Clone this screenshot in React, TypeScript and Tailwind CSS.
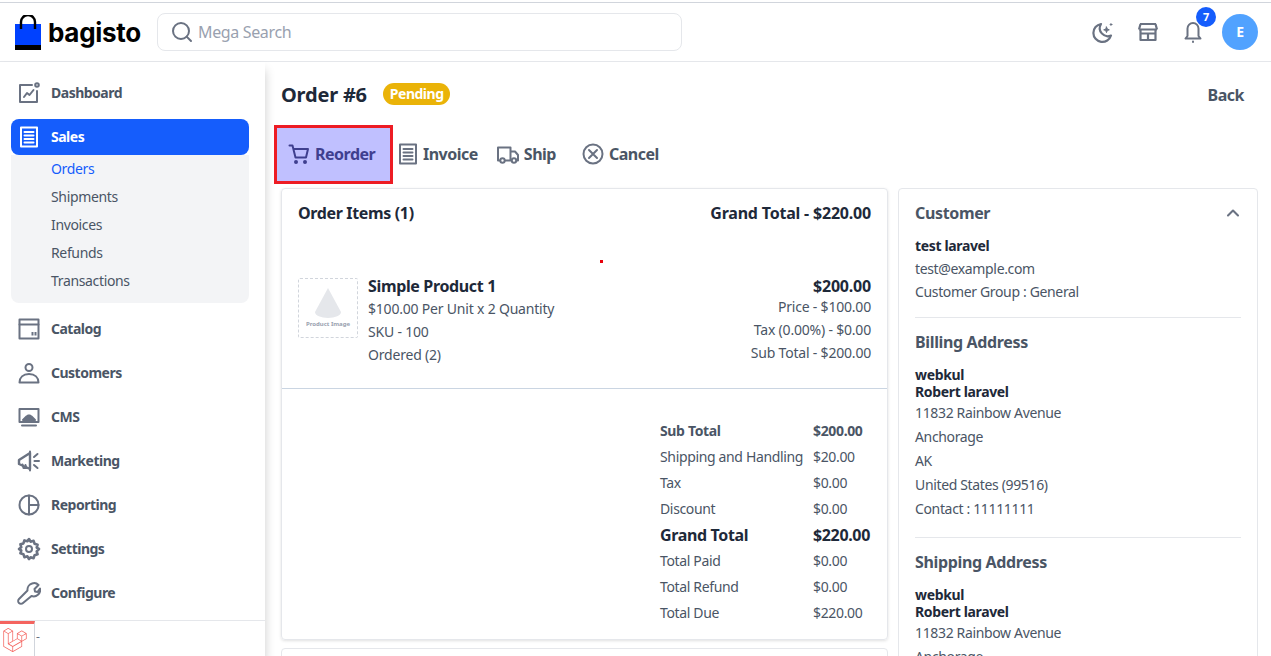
import { ChevronUp, Search } from "lucide-react";
import { SiLaravel } from "react-icons/si";
import type { ReactNode } from "react";

// icon strokes are all drawn on a 24 box, like the admin icon font
function Ico({ children, className = "size-6" }: { children: ReactNode; className?: string }) {
  return (
    <svg viewBox="0 0 24 24" fill="none" stroke="currentColor" strokeWidth="2" strokeLinecap="round" strokeLinejoin="round" className={className}>
      {children}
    </svg>
  );
}

const listIcon = (
  <>
    <rect x="4" y="2.500" width="16" height="19" />
    <path d="M7.500 7h9M7.500 10.500h9M7.500 14h9M7.500 17.500h9" />
  </>
);

const menu: { label: string; icon: ReactNode }[] = [
  {
    label: "Catalog",
    icon: (
      <>
        <rect x="2.500" y="2.500" width="19" height="19" />
        <path d="M2.500 7.500h19" />
        <path d="M15.500 15v3.500M18.500 15v3.500" strokeLinecap="butt" />
      </>
    ),
  },
  {
    label: "Customers",
    icon: (
      <>
        <circle cx="12" cy="6.500" r="3.500" />
        <path d="M2.500 21.500c0-5 3.500-8.500 9.500-8.500s9.500 3.500 9.500 8.500z" />
      </>
    ),
  },
  {
    label: "CMS",
    icon: (
      <>
        <path d="M2.500 4h19v13h-19zM5 20.500h14" />
        <path d="M6 15l3.500-3.500 1.500-1 2 0 1.500 1L18 15z" fill="currentColor" />
      </>
    ),
  },
  {
    label: "Marketing",
    icon: (
      <>
        <path d="M2 11l11-7v16L2 15z" strokeWidth="2.400" />
        <path d="M5.500 15.500l1 3.500h3l-1-3" />
        <path d="M13 2.500v19M17 8l3.500-3M17.500 12h4.500M17 16l3.500 3" />
      </>
    ),
  },
  {
    label: "Reporting",
    icon: (
      <>
        <circle cx="12" cy="12" r="9.500" />
        <path d="M12 2.500V12h9.500M12 12v9.500" />
      </>
    ),
  },
  {
    label: "Settings",
    icon: (
      <>
        <path
          d="M12 2l1.600 2.700 3-.9 1 3 3 .9-.9 3L22 12l-2.300 2.300.9 3-3 .9-1 3-3-.9L12 22l-1.600-2.700-3 .9-1-3-3-.9.900-3L2 12l2.300-1.700-.9-3 3-.9 1-3 3 .9z"
          strokeWidth="2.600"
        />
        <circle cx="12" cy="12" r="3" />
      </>
    ),
  },
  {
    label: "Configure",
    icon: (
      <path d="M15 2.500a6 6 0 0 1 6.500 1.500l-4 4 .5 2.500 2.500.5 2.500-3.500a6.500 6.500 0 0 1-8.500 7.500L6 22a2.800 2.800 0 0 1-4-4l8.500-8.500A6.500 6.500 0 0 1 15 2.500z" />
    ),
  },
];

const subMenu = ["Orders", "Shipments", "Invoices", "Refunds", "Transactions"];

const totals = [
  { label: "Sub Total", value: "$200.00", cls: "text-sm font-bold text-gray-600" },
  { label: "Shipping and Handling", value: "$20.00", cls: "text-sm text-gray-600" },
  { label: "Tax", value: "$0.00", cls: "text-sm text-gray-600" },
  { label: "Discount", value: "$0.00", cls: "text-sm text-gray-600" },
  { label: "Grand Total", value: "$220.00", cls: "text-base font-bold text-gray-800" },
  { label: "Total Paid", value: "$0.00", cls: "text-sm text-gray-600" },
  { label: "Total Refund", value: "$0.00", cls: "text-sm text-gray-600" },
  { label: "Total Due", value: "$220.00", cls: "text-sm text-gray-600" },
];

function NavRow({ label, icon }: { label: string; icon: ReactNode }) {
  return (
    <div className="flex h-9 items-center gap-2.5 px-1.5 text-sm font-bold tracking-[-0.5px] text-gray-600">
      <Ico className="size-6 text-gray-500">{icon}</Ico>
      {label}
    </div>
  );
}

function Address() {
  return (
    <>
      <p className="mt-[14px] text-sm leading-[17px] font-bold text-gray-800">webkul</p>
      <p className="text-sm leading-[17px] font-bold text-gray-800">Robert laravel</p>
      <div className="mt-[1px] text-sm leading-6 text-gray-600">
        <p>11832 Rainbow Avenue</p>
        <p>Anchorage</p>
        <p>AK</p>
        <p>United States (99516)</p>
        <p>Contact : 11111111</p>
      </div>
    </>
  );
}

export default function App() {
  return (
    <div className="relative h-[656px] overflow-hidden bg-white font-['Noto_Sans',sans-serif] tracking-[-0.35px]">
      <div className="h-[3px] border-b border-gray-300" />

      <header className="flex h-[59px] items-center border-b border-gray-200 pr-[13px] pl-[15px]">
        <svg viewBox="0 0 26 35" className="h-[35px] w-[26px]">
          <rect y="9" width="26" height="21" fill="#0041ff" />
          <rect y="30" width="26" height="5" fill="#000" />
          <path d="M6 14V7a7 7 0 0 1 14 0v7" fill="none" stroke="#000" strokeWidth="2.400" />
        </svg>
        <span className="ml-[7px] w-[94px] font-['Inter',sans-serif] text-[26px] font-bold tracking-[-0.3px] text-black">bagisto</span>
        <div className="ml-[15px] flex h-[38px] w-[525px] items-center gap-[4px] rounded-lg border border-gray-200 px-[12px]">
          <Search className="size-[24px] text-gray-500" strokeWidth={2} />
          <span className="text-base text-gray-400">Mega Search</span>
        </div>
        <div className="ml-auto flex items-center text-gray-500">
          <Ico className="size-6">
            <path d="M10 4a9 9 0 1 0 10 11.500A8 8 0 0 1 10 4z" strokeWidth="2.200" />
            <path d="M15.500 7l.8 2 2 .8-2 .8-.8 2-.8-2-2-.8 2-.8z" fill="currentColor" strokeWidth="1" />
            <circle cx="20" cy="4.500" r="0.800" fill="currentColor" strokeWidth="1" />
          </Ico>
          <Ico className="ml-[21px] size-6">
            <path d="M4 4h16M4.500 9.500v10.500h15V9.500M3 9.500h18M3 9.500L4.500 4M21 9.500L19.500 4M12 13.500H5M12 13.500v6.500M12 13.500h7" strokeWidth="2.200" strokeLinecap="butt" />
          </Ico>
          <div className="relative ml-[21px] size-6">
            <Ico className="size-6">
              <path d="M12 3a5.500 5.500 0 0 0-5.500 5.500V16L4.500 18.500h15L17.500 16V8.500A5.500 5.500 0 0 0 12 3z" />
              <path d="M12 21.500v.5" />
            </Ico>
            <span className="absolute -top-[13px] left-[15px] flex size-[20px] items-center justify-center rounded-full bg-blue-600 text-[11px] font-bold text-white">7</span>
          </div>
          <div className="ml-[17px] flex size-9 items-center justify-center rounded-full bg-blue-400 text-sm font-bold text-white">E</div>
        </div>
      </header>

      <div className="flex">
        <aside className="h-[594px] w-[265px] shrink-0 pt-[13px] shadow-[0_8px_10px_0_rgba(0,0,0,0.2)]">
          <div className="flex flex-col gap-2 pr-4 pl-[11px]">
            <NavRow
              label="Dashboard"
              icon={
                <>
                  <path d="M15 4H3v17h17V10" />
                  <circle cx="20" cy="4" r="1.800" />
                  <path d="M7 16l3-4 2.500 2 4-5" />
                </>
              }
            />
            <div>
              <div className="flex h-9 items-center gap-2.5 rounded-lg bg-blue-600 px-1.5 text-sm font-bold tracking-[-0.5px] text-white">
                <Ico className="size-6 text-white">{listIcon}</Ico>
                Sales
              </div>
              <div className="rounded-b-lg bg-gray-100 pb-2 pl-10 text-sm text-gray-600">
                {subMenu.map((s, i) => (
                  <div key={s} className={`flex h-7 items-center ${i === 0 ? "text-blue-600" : ""}`}>
                    {s}
                  </div>
                ))}
              </div>
            </div>
            {menu.map((m) => (
              <NavRow key={m.label} label={m.label} icon={m.icon} />
            ))}
          </div>
        </aside>

        <main className="min-w-0 flex-1 pt-[11px] pr-[13px] pl-4">
          <div className="flex h-[44px] items-center">
            <h1 className="text-xl font-bold tracking-[-0.2px] text-gray-800">Order #6</h1>
            <span className="mb-[2px] ml-[16px] rounded-full bg-[#eab308] px-[7px] py-[1px] text-sm font-bold tracking-[-0.5px] text-white">Pending</span>
            <span className="ml-auto pr-[14px] text-base font-bold tracking-[-0.5px] text-gray-600">Back</span>
          </div>

          <div className="-ml-[7px] mt-[8px] flex items-center text-base font-bold tracking-[-0.5px] text-gray-600">
            <div className="flex h-[59px] w-[119px] items-center gap-[4px] border-[3px] border-[#ed1c24] bg-[#c0c0ff] pb-[2px] pl-[10px] text-[#3f3f8f]">
              <Ico className="size-[24px]">
                <path d="M2.500 3.500h3l3 12h10.500l2-8.500H6.500" />
                <circle cx="9" cy="20" r="1" fill="currentColor" />
                <circle cx="18" cy="20" r="1" fill="currentColor" />
              </Ico>
              Reorder
            </div>
            <div className="mb-[1px] ml-[3px] flex items-center gap-[3px]">
              <Ico className="size-6 text-gray-500">{listIcon}</Ico>
              Invoice
            </div>
            <div className="mb-[1px] ml-[18px] flex items-center gap-[4px]">
              <Ico className="size-6 text-gray-500">
                <path d="M14.500 18.500V5.500H2v13h2M9 18.500h6M14.500 9.500H19l3 3.500v5.500h-1" />
                <circle cx="6.500" cy="18.500" r="2.200" />
                <circle cx="18" cy="18.500" r="2.200" />
              </Ico>
              Ship
            </div>
            <div className="mb-[1px] ml-[25px] flex items-center gap-[4px]">
              <Ico className="size-6 text-gray-500">
                <circle cx="12" cy="12" r="9.500" />
                <path d="M8 8l8 8M16 8l-8 8" />
              </Ico>
              Cancel
            </div>
          </div>

          <div className="mt-1 flex gap-[10px]">
            <div className="flex w-[607px] shrink-0 flex-col gap-2">
              <section className="h-[452px] rounded-[4px] border border-gray-200 shadow-[0_1px_3px_rgba(0,0,0,0.12)]">
                <div className="flex items-center justify-between px-4 pt-[14px] text-base leading-5 font-bold text-gray-800">
                  <span>Order Items (1)</span>
                  <span className="tracking-[-0.2px]">Grand Total - $220.00</span>
                </div>

                <div className="mt-[41px] flex h-[125px] justify-between border-b border-slate-300 px-4 pt-[10px] tracking-[-0.2px]">
                  <div className="flex gap-[10px]">
                    <div className="mt-[4px] flex size-[60px] flex-col items-center rounded-[2px] border border-dashed border-gray-300 pt-[8px]">
                      <svg viewBox="0 0 30 32" className="h-[32px] w-[30px]">
                        <path d="M15 1L28 25a13 6 0 0 1-26 0z" fill="#e5e7eb" />
                      </svg>
                      <span className="mt-[1px] text-[6px] font-bold tracking-normal text-gray-400">Product Image</span>
                    </div>
                    <div className="pt-[1px] text-sm leading-[23px] text-gray-600">
                      <p className="text-base leading-[22px] font-bold tracking-[-0.35px] text-gray-800">Simple Product 1</p>
                      <p>$100.00 Per Unit x 2 Quantity</p>
                      <p>SKU - 100</p>
                      <p>Ordered (2)</p>
                    </div>
                  </div>
                  <div className="text-right text-sm leading-[23px] text-gray-600">
                    <p className="pt-[3px] text-base leading-[18px] font-bold tracking-[-0.2px] text-gray-800">$200.00</p>
                    <p>Price - $100.00</p>
                    <p>Tax (0.00%) - $0.00</p>
                    <p>Sub Total - $200.00</p>
                  </div>
                </div>

                <div className="mt-[29px] flex flex-col items-end pr-4">
                  {totals.map((t) => (
                    <div key={t.label} className={`flex h-[26px] items-center ${t.cls}`}>
                      <span className="w-[153px]">{t.label}</span>
                      <span className="w-[58px]">{t.value}</span>
                    </div>
                  ))}
                </div>
              </section>
              <section className="h-[40px] rounded-[4px] border border-gray-200" />
            </div>

            <section className="h-[520px] min-w-0 flex-1 rounded-[4px] border border-gray-200 px-4 pt-[14px]">
              <div className="flex items-center justify-between text-base leading-5 font-bold text-gray-600">
                Customer
                <ChevronUp className="-mr-[2px] size-[20px] text-gray-500" strokeWidth={2.500} />
              </div>
              <div className="mt-[11px] text-sm leading-[23px] text-gray-600">
                <p className="font-bold text-gray-800">test laravel</p>
                <p>test@example.com</p>
                <p>Customer Group : General</p>
              </div>
              <div className="mt-[14px] border-t border-gray-200 pt-[14px]">
                <h2 className="text-base leading-5 font-bold text-gray-600">Billing Address</h2>
                <Address />
              </div>
              <div className="mt-[16px] border-t border-gray-200 pt-[14px]">
                <h2 className="text-base leading-5 font-bold text-gray-600">Shipping Address</h2>
                <Address />
              </div>
            </section>
          </div>
        </main>
      </div>

      {/* stray marker dot from the screenshot */}
      <div className="absolute top-[260px] left-[600px] size-[3px] bg-red-600" />

      {/* debug bar sits over the bottom of the sidebar */}
      <div className="absolute bottom-0 left-0 flex h-9 w-[265px] items-start border-t border-gray-200 bg-white">
        <div className="flex h-[35px] w-[35px] items-center justify-center border-t-[3px] border-r border-t-[#f4645f] border-r-gray-300 pr-[5px]">
          <SiLaravel className="size-[24px] text-[#f4645f]" />
        </div>
        <span className="mt-[8px] ml-[1px] text-xs text-gray-500">-</span>
      </div>
    </div>
  );
}
